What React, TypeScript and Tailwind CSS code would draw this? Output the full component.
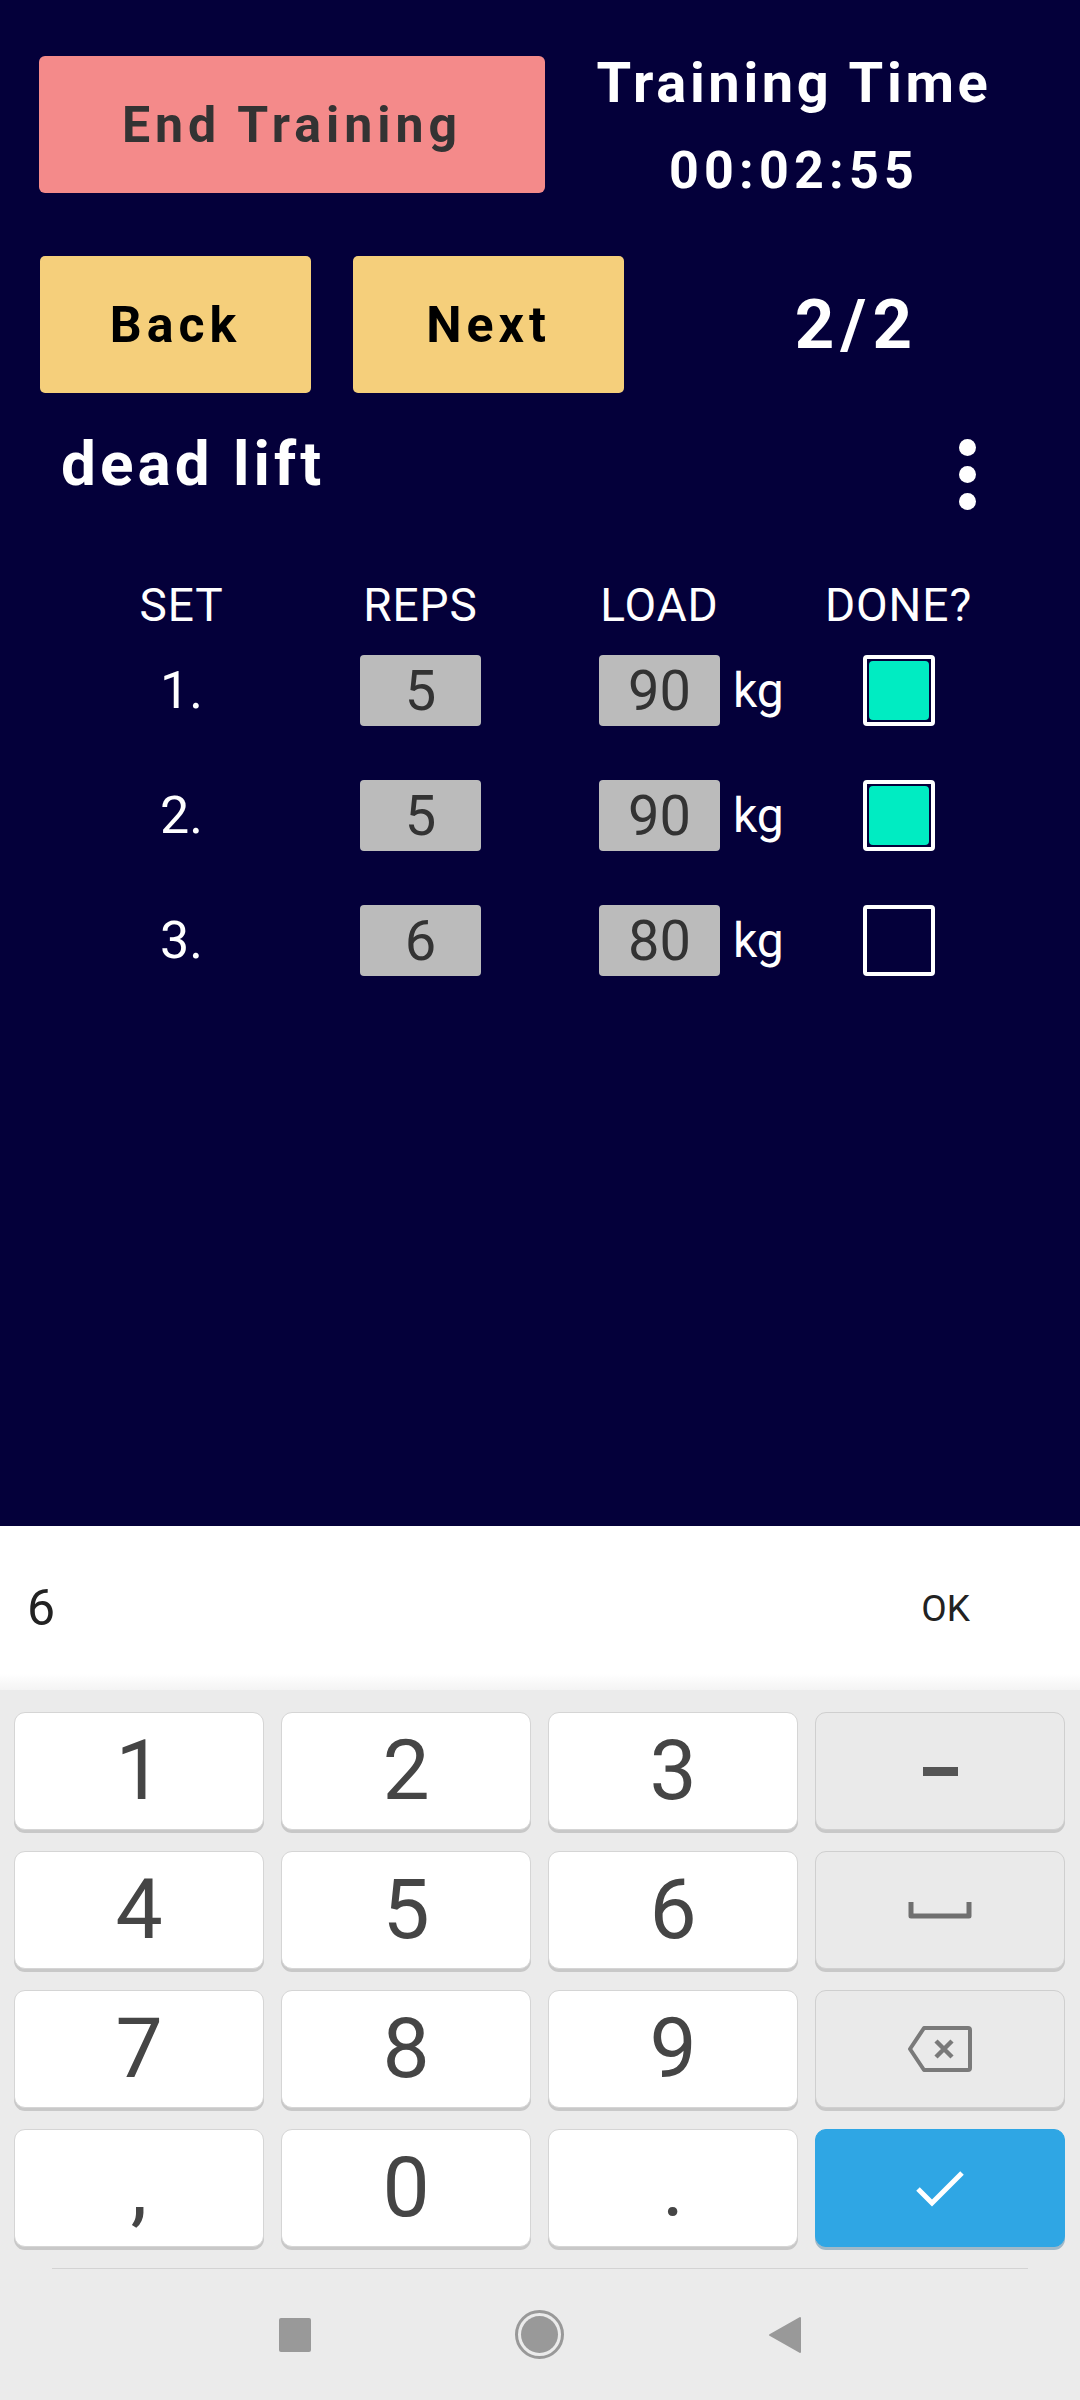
import React from "react";

const F = { fontFamily: "Roboto, 'Noto Sans', sans-serif" };

function Check({ checked }: { checked: boolean }) {
  return (
    <div className="w-[72px] h-[71px] rounded-[4px] border-[4px] border-white p-[2px] box-border">
      {checked && <div className="w-full h-full rounded-[4px] bg-[#00ecc2]" />}
    </div>
  );
}

function Row({ n, reps, load, done }: { n: string; reps: string; load: string; done: boolean }) {
  return (
    <div className="grid grid-cols-4 h-[71px] items-center">
      <div className="text-center text-white text-[52px] leading-none">{n}</div>
      <div className="flex justify-center">
        <div className="w-[121px] h-[71px] rounded-[4px] bg-[#bbbbbb] flex items-center justify-center text-[56px] leading-none text-[#333333]">
          {reps}
        </div>
      </div>
      <div className="flex justify-center items-center">
        <div className="w-[121px] h-[71px] rounded-[4px] bg-[#bbbbbb] flex items-center justify-center text-[56px] leading-none text-[#333333]">
          {load}
        </div>
        <span className="w-0 overflow-visible whitespace-nowrap">
          <span className="ml-[13px] text-white text-[48px] leading-none">kg</span>
        </span>
      </div>
      <div className="flex justify-center">
        <Check checked={done} />
      </div>
    </div>
  );
}

function Key({ children, kind = "white" }: { children: React.ReactNode; kind?: "white" | "gray" | "blue" }) {
  const cls =
    kind === "white"
      ? "bg-white border-[#d5d5d5] shadow-[0_3px_0_#c8c8c8]"
      : kind === "gray"
      ? "bg-[#eaeaea] border-[#cfcfcf] shadow-[0_3px_0_#c8c8c8]"
      : "bg-[#2fa6e4] border-[#2fa6e4] shadow-[0_3px_0_#9fb9c9]";
  return (
    <div className={`h-[118px] rounded-[11px] border flex items-center justify-center text-[84px] leading-none text-[#454545] ${cls}`}>
      {children}
    </div>
  );
}

export default function App() {
  return (
    <div className="w-[1080px] h-[2400px] flex flex-col overflow-hidden" style={F}>
      {/* App area */}
      <div className="h-[1526px] bg-[#04003a] pt-[56px]">
        <div className="flex h-[137px] pl-[39px] pr-[37px]">
          <div className="w-[506px] h-[137px] rounded-[6px] bg-[#f48a8a] flex items-center justify-center text-[50px] font-bold tracking-[0.1em] text-[#333333] leading-none">
            End Training
          </div>
          <div className="flex-1 flex flex-col items-center text-white font-bold">
            <div className="text-[56px] leading-none tracking-[0.065em] mt-[-1px]">Training Time</div>
            <div className="text-[52px] leading-none tracking-[0.1em] mt-[34px]">00:02:55</div>
          </div>
        </div>

        <div className="flex pl-[40px] mt-[63px] items-center">
          <div className="w-[271px] h-[137px] rounded-[5px] bg-[#f5cf7b] flex items-center justify-center text-[50px] font-bold tracking-[0.1em] text-black leading-none">
            Back
          </div>
          <div className="w-[271px] h-[137px] rounded-[5px] bg-[#f5cf7b] flex items-center justify-center text-[50px] font-bold tracking-[0.1em] text-black leading-none ml-[42px]">
            Next
          </div>
          <div className="flex-1 text-center text-white font-bold text-[69px] leading-none tracking-[0.09em] pl-[9px]">2/2</div>
        </div>

        <div className="flex items-start justify-between pl-[61px] pr-[104px] mt-[40px]">
          <div className="text-white font-bold text-[62px] leading-none tracking-[0.065em]">dead lift</div>
          <div className="flex flex-col gap-[10px] mt-[6px]">
            <div className="w-[17px] h-[17px] rounded-full bg-white" />
            <div className="w-[17px] h-[17px] rounded-full bg-white" />
            <div className="w-[17px] h-[17px] rounded-full bg-white" />
          </div>
        </div>

        <div className="ml-[62px] w-[956px] mt-[72px]">
          <div className="grid grid-cols-4 text-white text-[46px] leading-none text-center tracking-[0.02em]">
            <div>SET</div>
            <div>REPS</div>
            <div>LOAD</div>
            <div>DONE?</div>
          </div>
          <div className="flex flex-col gap-[54px] mt-[27px]">
            <Row n="1." reps="5" load="90" done={true} />
            <Row n="2." reps="5" load="90" done={true} />
            <Row n="3." reps="6" load="80" done={false} />
          </div>
        </div>
      </div>

      {/* Suggestion bar */}
      <div className="h-[164px] bg-gradient-to-b from-white from-[90%] to-[#f4f4f4] flex items-center justify-between pl-[27px] pr-[110px]">
        <span className="text-[50px] leading-none text-[#222222]">6</span>
        <span className="text-[37px] leading-none text-[#222222]">OK</span>
      </div>

      {/* Keyboard */}
      <div className="flex-1 bg-[#ebebeb] flex flex-col">
        <div className="grid grid-cols-4 gap-x-[17px] gap-y-[21px] pl-[14px] pr-[15px] pt-[22px]">
          <Key>1</Key>
          <Key>2</Key>
          <Key>3</Key>
          <Key kind="gray">
            <div className="w-[35px] h-[9px] bg-[#555555]" />
          </Key>
          <Key>4</Key>
          <Key>5</Key>
          <Key>6</Key>
          <Key kind="gray">
            <svg width="64" height="18" viewBox="0 0 64 18">
              <path d="M3 1 V15 H61 V1" fill="none" stroke="#707070" strokeWidth="5" strokeLinejoin="round" />
            </svg>
          </Key>
          <Key>7</Key>
          <Key>8</Key>
          <Key>9</Key>
          <Key kind="gray">
            <svg width="66" height="46" viewBox="0 0 66 46">
              <path
                d="M17 2 H61 a2 2 0 0 1 2 2 V42 a2 2 0 0 1 -2 2 H17 L3 23 Z"
                fill="none"
                stroke="#7a7a7a"
                strokeWidth="4"
                strokeLinejoin="round"
              />
              <path d="M29 15 L45 31 M45 15 L29 31" stroke="#7a7a7a" strokeWidth="4.5" />
            </svg>
          </Key>
          <Key>,</Key>
          <Key>0</Key>
          <Key>.</Key>
          <Key kind="blue">
            <svg width="50" height="40" viewBox="0 0 50 40">
              <path d="M3 21 L17 35 L47 5" fill="none" stroke="#ffffff" strokeWidth="5" />
            </svg>
          </Key>
        </div>
        <div className="ml-[52px] w-[976px] h-[1px] bg-[#d3d3d3] mt-[21px]" />
        <div className="flex-1 flex items-center justify-center gap-[204px]">
          <div className="w-[32px] h-[34px] rounded-[2px] bg-[#999999]" />
          <div className="w-[49px] h-[49px] rounded-full border-[3px] border-[#999999] p-[3px]">
            <div className="w-full h-full rounded-full bg-[#999999]" />
          </div>
          <svg width="34" height="38" viewBox="0 0 34 38">
            <path d="M32 2 V36 L2 19 Z" fill="#999999" stroke="#999999" strokeWidth="2" strokeLinejoin="round" />
          </svg>
        </div>
      </div>
    </div>
  );
}
